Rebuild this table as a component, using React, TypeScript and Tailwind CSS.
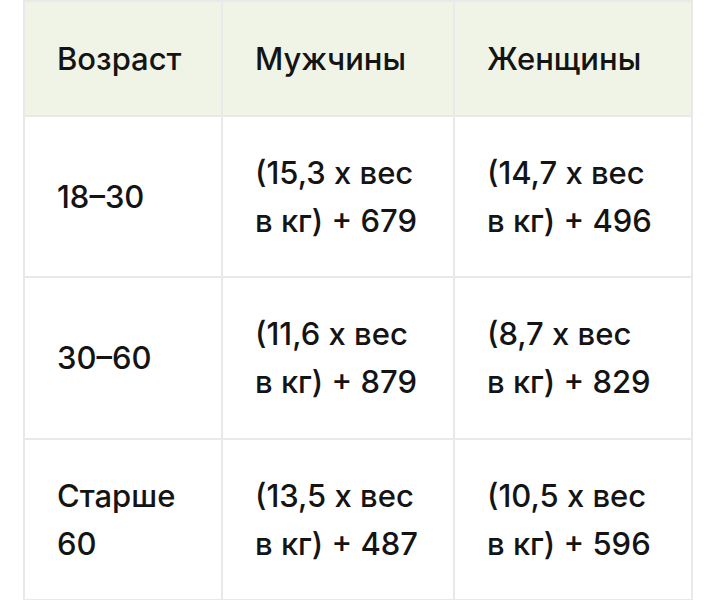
import React from "react";

const font = { fontFamily: "Inter, 'Liberation Sans', sans-serif" };

const rows: { age: React.ReactNode; m: [string, string]; w: [string, string] }[] = [
  { age: "18–30", m: ["(15,3 х вес", "в кг) + 679"], w: ["(14,7 х вес", "в кг) + 496"] },
  { age: "30–60", m: ["(11,6 х вес", "в кг) + 879"], w: ["(8,7 х вес", "в кг) + 829"] },
  { age: <>Старше<br />60</>, m: ["(13,5 х вес", "в кг) + 487"], w: ["(10,5 х вес", "в кг) + 596"] },
];

export default function App() {
  return (
    <div className="w-[717px] h-[600px] bg-white overflow-hidden" style={font}>
      <div className="ml-[23px] w-[670px] grid grid-cols-[196px_230px_236px] grid-rows-[113px_159px_160px_159px] gap-[2px] p-[2px] bg-[#e9e9e9] text-[31px] leading-[48px] font-medium text-[#141414]">
        <div className="bg-[#f0f4e6] flex items-center pl-[32px]">Возраст</div>
        <div className="bg-[#f0f4e6] flex items-center pl-[32px]">Мужчины</div>
        <div className="bg-[#f0f4e6] flex items-center pl-[32px]">Женщины</div>
        {rows.map((r, i) => (
          <React.Fragment key={i}>
            <div className="bg-white flex items-center pl-[32px]">
              <div>{r.age}</div>
            </div>
            <div className="bg-white flex items-center pl-[32px]">
              <div>
                {r.m[0]}
                <br />
                {r.m[1]}
              </div>
            </div>
            <div className="bg-white flex items-center pl-[32px]">
              <div>
                {r.w[0]}
                <br />
                {r.w[1]}
              </div>
            </div>
          </React.Fragment>
        ))}
      </div>
    </div>
  );
}
